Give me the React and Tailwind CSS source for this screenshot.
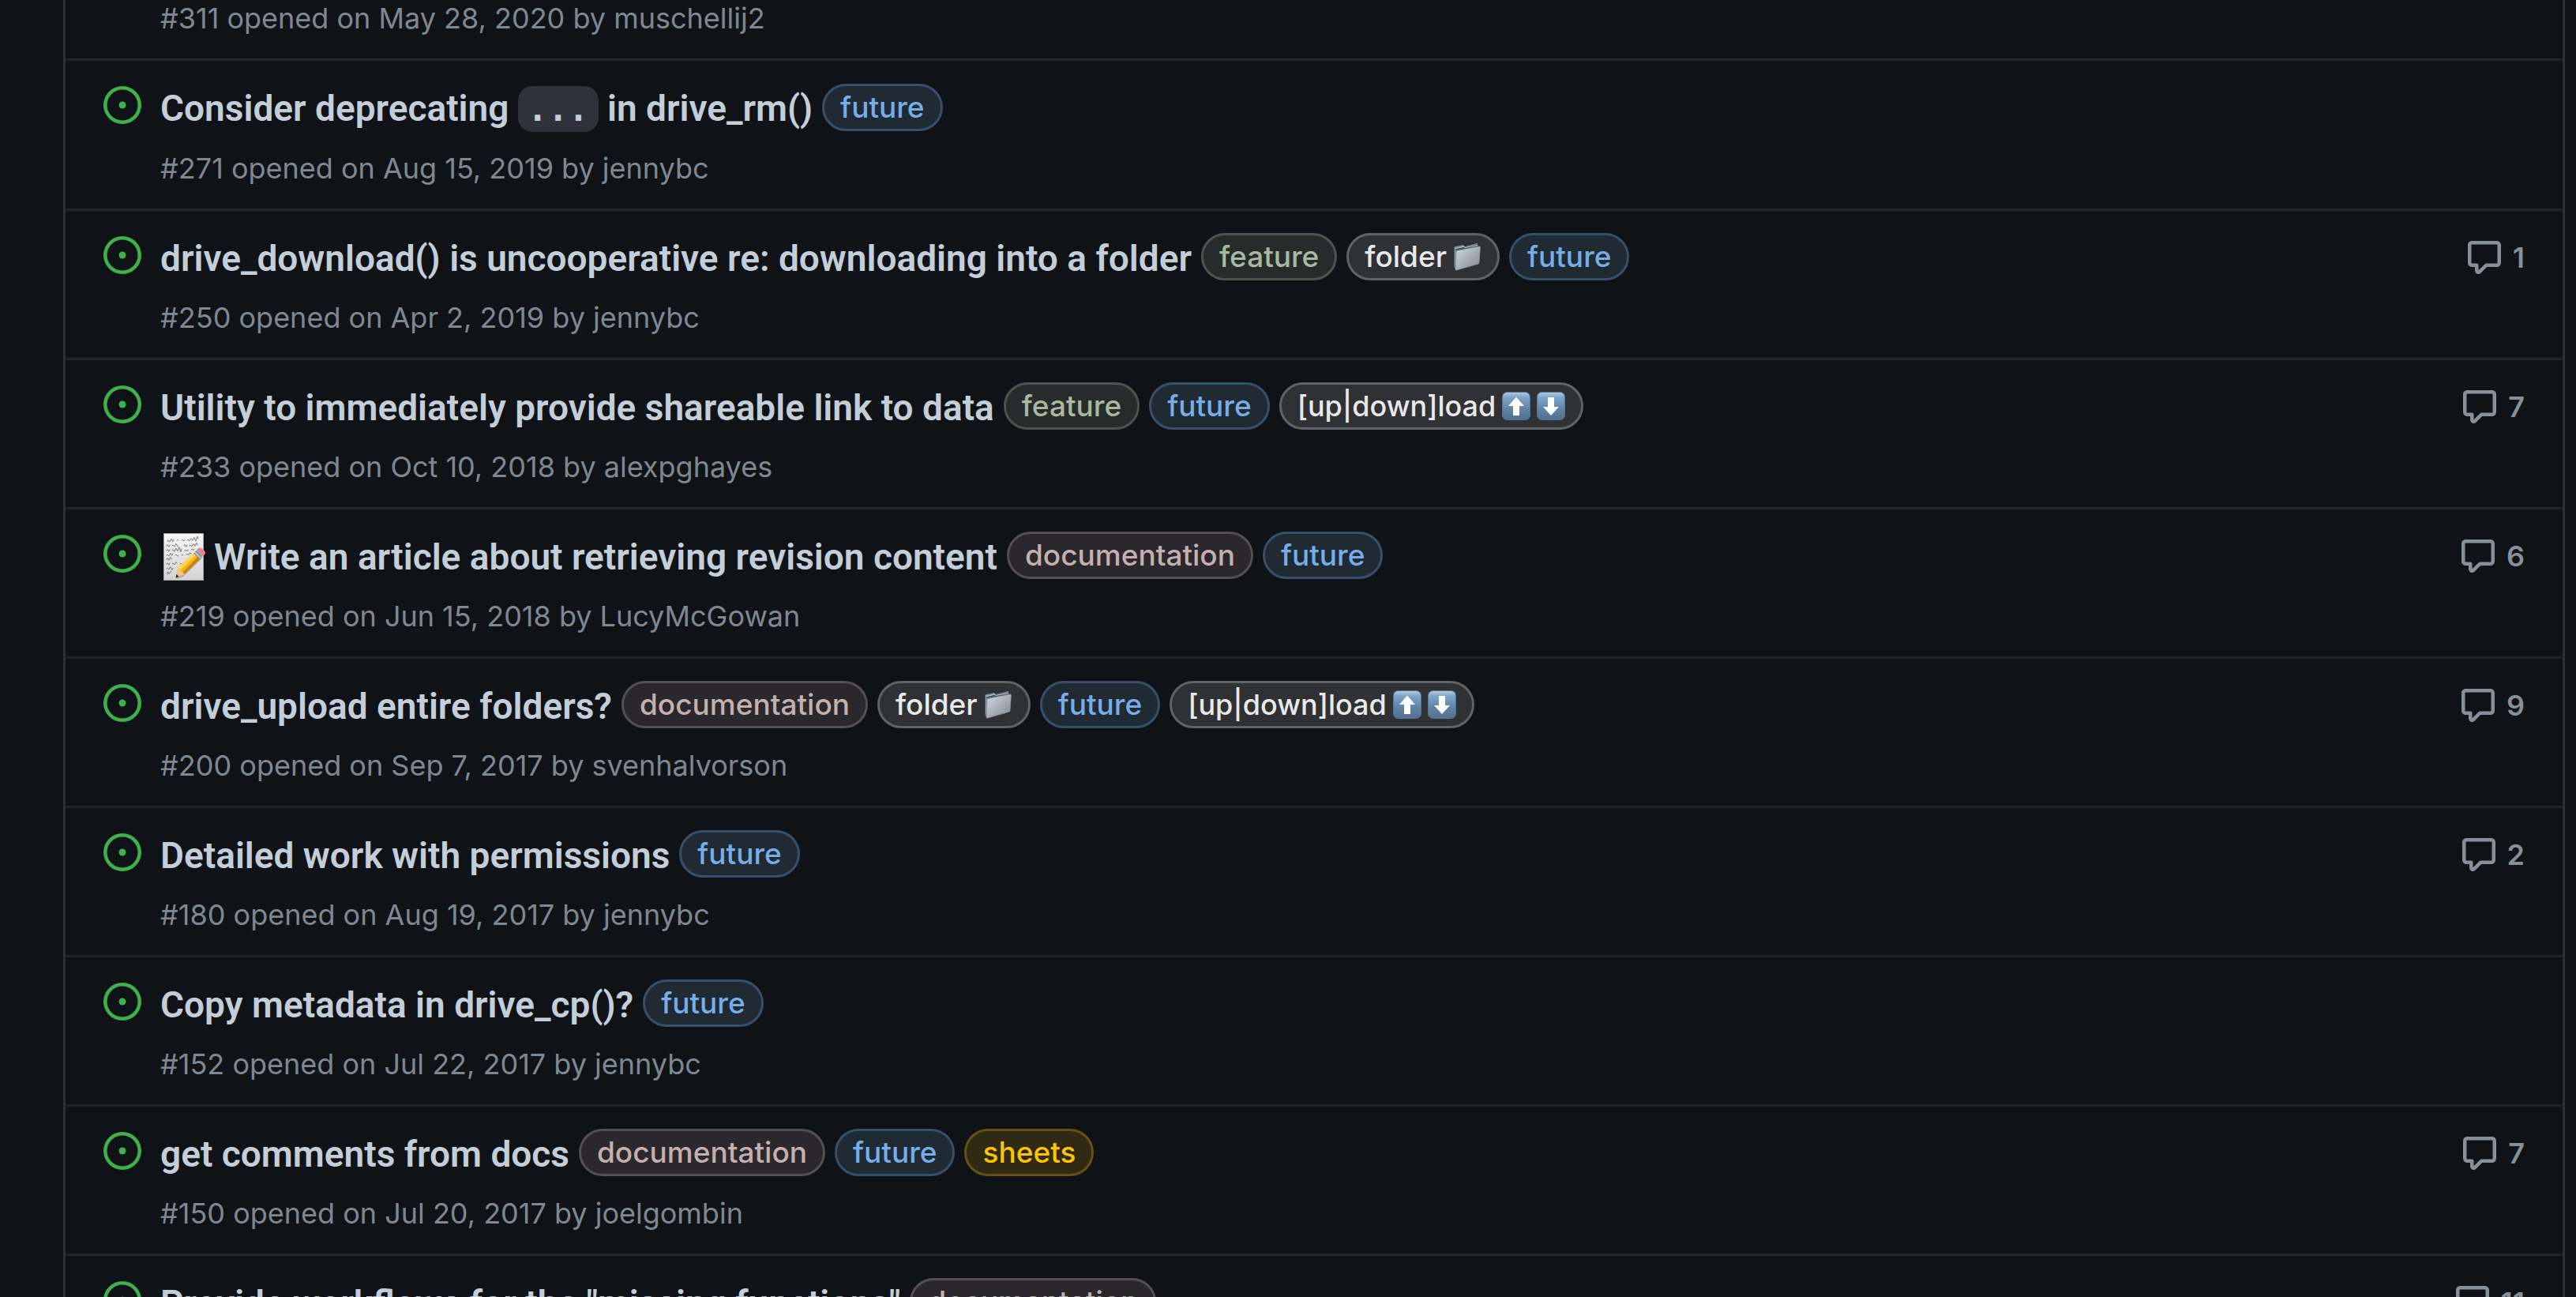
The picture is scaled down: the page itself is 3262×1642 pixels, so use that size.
import React from "react";

const labelStyles = {
  future: "border-[#374f69] bg-[#202a33] text-[#77ade9]",
  feature: "border-[#4c544d] bg-[#262b2b] text-[#a9b9a1]",
  folder: "border-[#606366] bg-[#2f3135] text-[#e9e9e9]",
  load: "border-[#606366] bg-[#2f3135] text-[#e9e9e9]",
  documentation: "border-[#544f50] bg-[#2a282c] text-[#c4b0ae]",
  sheets: "border-[#675110] bg-[#302a15] text-[#fbc506]",
};

const issues = [
  {
    number: 271,
    title: ["Consider deprecating ", { code: "..." }, " in drive_rm()"],
    labels: ["future"],
    date: "Aug 15, 2019",
    author: "jennybc",
  },
  {
    number: 250,
    title: ["drive_download() is uncooperative re: downloading into a folder"],
    labels: ["feature", "folder", "future"],
    date: "Apr 2, 2019",
    author: "jennybc",
    comments: 1,
  },
  {
    number: 233,
    title: ["Utility to immediately provide shareable link to data"],
    labels: ["feature", "future", "load"],
    date: "Oct 10, 2018",
    author: "alexpghayes",
    comments: 7,
  },
  {
    number: 219,
    memo: true,
    title: ["Write an article about retrieving revision content"],
    labels: ["documentation", "future"],
    date: "Jun 15, 2018",
    author: "LucyMcGowan",
    comments: 6,
  },
  {
    number: 200,
    title: ["drive_upload entire folders?"],
    labels: ["documentation", "folder", "future", "load"],
    date: "Sep 7, 2017",
    author: "svenhalvorson",
    comments: 9,
  },
  {
    number: 180,
    title: ["Detailed work with permissions"],
    labels: ["future"],
    date: "Aug 19, 2017",
    author: "jennybc",
    comments: 2,
  },
  {
    number: 152,
    title: ["Copy metadata in drive_cp()?"],
    labels: ["future"],
    date: "Jul 22, 2017",
    author: "jennybc",
  },
  {
    number: 150,
    title: ["get comments from docs"],
    labels: ["documentation", "future", "sheets"],
    date: "Jul 20, 2017",
    author: "joelgombin",
    comments: 7,
  },
  {
    title: ['Provide workflows for the "missing functions"'],
    labels: ["documentation"],
    comments: 11,
  },
];

function OpenIcon() {
  return (
    <svg viewBox="0 0 16 16" className="size-12 shrink-0 fill-[#3fb14b]" role="img" aria-label="Open issue">
      <path d="M8 9.5a1.5 1.5 0 1 0 0-3 1.5 1.5 0 0 0 0 3Z" />
      <path d="M8 0a8 8 0 1 1 0 16A8 8 0 0 1 8 0ZM1.5 8a6.5 6.5 0 1 0 13 0 6.5 6.5 0 0 0-13 0Z" />
    </svg>
  );
}

function CommentIcon() {
  return (
    <svg viewBox="0 0 16 16" className="size-12 fill-current" aria-hidden="true">
      <path d="M1 2.75C1 1.784 1.784 1 2.75 1h10.5c.966 0 1.75.784 1.75 1.75v7.5A1.75 1.75 0 0 1 13.25 12H9.06l-2.573 2.573A1.458 1.458 0 0 1 4 13.543V12H2.75A1.75 1.75 0 0 1 1 10.25Zm1.75-.25a.25.25 0 0 0-.25.25v7.5c0 .138.112.25.25.25h2a.75.75 0 0 1 .75.75v2.19l2.72-2.72a.749.749 0 0 1 .53-.22h4.5a.25.25 0 0 0 .25-.25v-7.5a.25.25 0 0 0-.25-.25Z" />
    </svg>
  );
}

function FolderEmoji() {
  return (
    <svg viewBox="0 0 36 36" className="size-9 shrink-0" role="img" aria-label="folder">
      <defs>
        <linearGradient id="folder-front" x1="0" y1="0" x2="1" y2="1">
          <stop offset="0" stopColor="#d5dbe1" />
          <stop offset="0.5" stopColor="#a9afb6" />
          <stop offset="1" stopColor="#83888e" />
        </linearGradient>
      </defs>
      <path d="M1.5 5.5 13 3l1.5 2L31 1l.5 5L5 12 3 34 1.5 30Z" fill="#7f929f" />
      <path d="M2 8 14 5.5 31 2.5v3L4 10Z" fill="#425361" />
      <path d="M2 8 14 5l1 1.5 16-3" fill="none" stroke="#b9c9d3" strokeWidth="1" />
      <path d="M5.5 10.5 33 5c1-.2 1.500.3 1.400 1.200L33 25.500c0 1-.6 1.500-1.500 1.800L4.500 35c-1 .3-1.500-.2-1.400-1.200L4.200 12c0-.8.5-1.300 1.300-1.500Z" fill="url(#folder-front)" stroke="#8f969d" strokeWidth="0.700" />
    </svg>
  );
}

function ArrowEmoji({ down }) {
  return (
    <svg viewBox="0 0 36 36" className="size-9 shrink-0" role="img" aria-label={down ? "down" : "up"}>
      <defs>
        <linearGradient id="arrow-tile" x1="0" y1="0" x2="0" y2="1">
          <stop offset="0" stopColor="#b4cbe0" />
          <stop offset="0.2" stopColor="#7da3c6" />
          <stop offset="0.6" stopColor="#5f84a8" />
          <stop offset="1" stopColor="#54708c" />
        </linearGradient>
      </defs>
      <rect x="0.500" y="0.500" width="35" height="35" rx="6" fill="url(#arrow-tile)" stroke="#4f7697" />
      <path
        d={down ? "M14 7h8v12h6L18 30 8 19h6Z" : "M14 30h8V18h6L18 6.500 8 18h6Z"}
        fill="#fff"
      />
    </svg>
  );
}

function MemoEmoji() {
  return (
    <svg viewBox="0 0 60 60" className="size-[60px] shrink-0" role="img" aria-label="memo">
      <defs>
        <linearGradient id="memo-paper" x1="0" y1="0" x2="0" y2="1">
          <stop offset="0" stopColor="#f7f7f7" />
          <stop offset="1" stopColor="#d3d3d3" />
        </linearGradient>
      </defs>
      <rect x="4.500" y="0.500" width="50" height="59" fill="url(#memo-paper)" stroke="#a5a5a5" />
      <g fill="none" stroke="#5c5c5c" strokeWidth="0.800" strokeLinecap="round">
        <path d="M9 10q1-3 2 0t2-1 2 0 2-1M21 9q1-2 2 0M27 9q1-2 2 0t2 0M34 9q1-2 2 0t2-1 2 0 2-1 2 1 2-1 2 0" />
        <path d="M8 16q1-3 2 0t2-1M15 16q1-2 2 0t2-1 2 0 2 2M30 16q1-3 2 0t2-1M37 16q1-2 2 0t2-1 2 0 2-1 2 1" />
        <path d="M8 22q1-3 2 0t2-1M15 22q1-3 2 0t2-1 2 0 2-1 2 1 2-1M31 22q1-2 2 0t2-1M39 21q1-2 2 0t2-1" />
        <path d="M8 28q1-2 2 0t2-1 2 0 2-1M19 28q1-2 2 0t2 1M27 28q1-2 2 0M33 27q1-2 2 0t2-1 2 0" />
        <path d="M8 33q1-3 2 0t2-1 2 1" />
        <path d="M8 39q1-3 2 0t2-1M15 39q1-2 2 0t2-1 2 0M25 39q1-2 2 0t2-1" />
        <path d="M8 45q1-2 2 0t2-1 2 1 2-1" />
        <path d="M9 52q0-5 1-2t2 0 2-1" />
      </g>
      <path d="M20 56 45 27l8 5-24 23-8 3Z" fill="#000" opacity="0.200" />
      <path d="m19.500 56.500 2.500-12.500L44.500 23.500l7.500 7.500L30.500 52Z" fill="#f3b51d" />
      <path d="m22 44 22.500-20.500 2.500 2.500-22.500 21.500Z" fill="#ffd84a" />
      <path d="m28 50 21-21.500 3 2.500-21.500 21Z" fill="#c9810f" />
      <path d="m19.500 56.500 2.500-12.500 2.500 3 3.500 2 2.500 3Z" fill="#efc690" />
      <path d="m19.500 56.500 1-4.500 3 3Z" fill="#222" />
      <path d="m42 25.500 4-4 8 7.500-4 4.200Z" fill="#8997a5" />
      <path d="m43 24.500 1-1 8 7.500-1 1Z" fill="#c8d0d8" />
      <path d="m46 21.500 2-2.500c3-2.500 11 4.500 8.500 7.500L54 29Z" fill="#ef8290" />
    </svg>
  );
}

function Label({ kind }) {
  return (
    <a
      href={"#label-" + kind}
      className={"flex h-[60px] shrink-0 items-center rounded-full border-3 px-5 text-[37px] font-medium " + labelStyles[kind]}
    >
      {kind === "folder" && (
        <>
          <span className="mr-2">folder</span>
          <FolderEmoji />
        </>
      )}
      {kind === "load" && (
        <>
          <span className="mr-2 text-[36px]">[up|down]load</span>
          <span className="flex gap-2">
            <ArrowEmoji />
            <ArrowEmoji down />
          </span>
        </>
      )}
      {kind !== "folder" && kind !== "load" && kind}
    </a>
  );
}

function Meta({ number, date, author }) {
  return (
    <p className="text-[36px] leading-[54px] text-[#7f8892]">
      #{number} opened on {date} by <a href={"#author-" + author}>{author}</a>
    </p>
  );
}

function IssueRow({ issue }) {
  return (
    <li className="flex items-start border-t-3 border-[#212428] px-12 pb-6">
      <div className="pt-8">
        <OpenIcon />
      </div>
      <div className="min-w-0 flex-1 pl-6">
        <div className="flex items-center pt-6">
          <h3 className="mr-3 text-[46px] leading-[72px] font-semibold whitespace-pre text-[#c4ced8] font-[Roboto,sans-serif]">
            <a href={"#issue-" + (issue.number || "next")} className="flex items-center">
              {issue.memo && (
                <span className="mr-2">
                  <MemoEmoji />
                </span>
              )}
              <span>
                {issue.title.map((part, i) =>
                  part.code ? (
                    <code
                      key={i}
                      className="rounded-[18px] bg-[#2f323a] px-3 py-1 text-[43px] font-['DejaVu_Sans_Mono',monospace]"
                    >
                      {part.code}
                    </code>
                  ) : (
                    part
                  )
                )}
              </span>
            </a>
          </h3>
          <div className="flex gap-3 pb-1">
            {issue.labels.map((kind) => (
              <Label key={kind} kind={kind} />
            ))}
          </div>
        </div>
        {issue.number && (
          <div className="pt-3">
            <Meta {...issue} />
          </div>
        )}
      </div>
      {issue.comments && (
        <a
          href={"#comments-" + (issue.number || "next")}
          className="flex items-center gap-3 pt-8 text-[36px] font-semibold text-[#868f9a]"
        >
          <CommentIcon />
          {issue.comments}
        </a>
      )}
    </li>
  );
}

export default function App() {
  return (
    <main className="h-screen overflow-hidden bg-[#0f1317] pr-3.5 pl-20 font-[Inter,sans-serif]">
      <ul className="min-h-full border-x-3 border-[#2e3136]">
        <li className="flex h-[74px] items-end overflow-hidden pb-6 pl-30">
          <Meta number={311} date="May 28, 2020" author="muschellij2" />
        </li>
        {issues.map((issue) => (
          <IssueRow key={issue.number || "next"} issue={issue} />
        ))}
      </ul>
    </main>
  );
}
